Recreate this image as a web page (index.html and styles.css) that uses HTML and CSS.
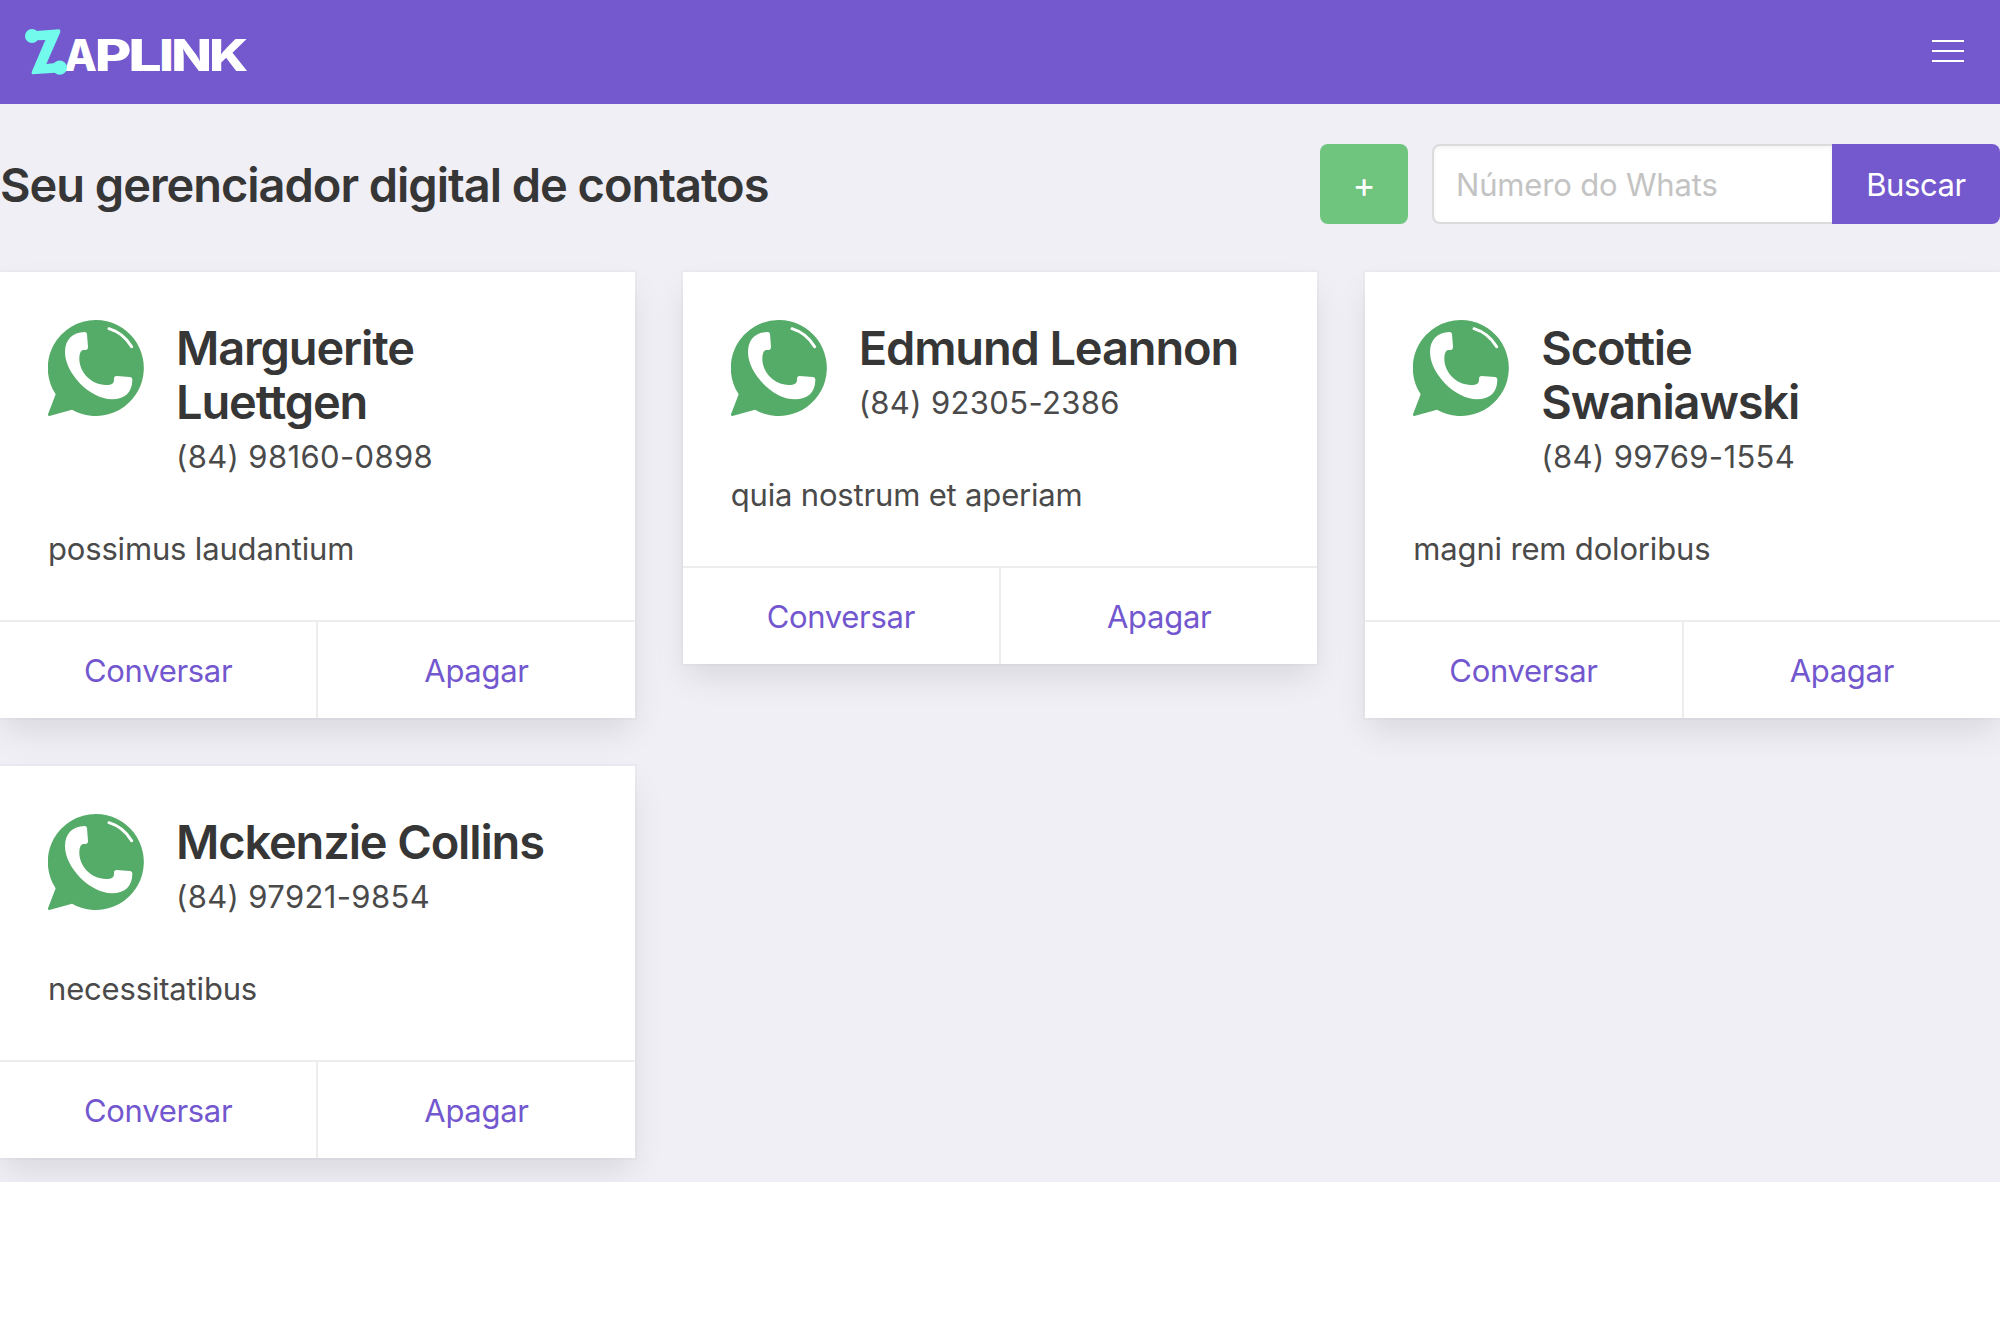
FILE: index.html
```html
<!DOCTYPE html>
<html lang="pt-BR">
<head>
<meta charset="utf-8">
<title>Zaplink</title>
<link rel="stylesheet" href="styles.css">
</head>
<body>
<svg class="sprite" aria-hidden="true">
  <symbol id="whats" viewBox="54 60 288 288">
    <path fill="#55ab68" d="M198 60a144 144 0 1 1-72 269L58 348Q53 348 54 343L77 283A144 144 0 0 1 198 60Z"/>
    <path fill="#fff" d="M164 96Q170 96 171 102L174 141Q174 150 166 150H160C151 152 148 162 148 178C149 218 184 255 228 255C246 255 253 250 252 236Q252 228 260 228L299 231Q308 232 307 241C306 279 284 298 246 298C180 298 105 220 105 157C105 119 127 97 164 96Z"/>
    <path fill="none" stroke="#fff" stroke-width="9" stroke-linecap="round" d="M237 86Q280 99 305 140"/>
  </symbol>
</svg>
<header class="navbar">
  <svg class="logo" viewBox="60 66 700 176" role="img" aria-label="Zaplink">
    <g class="logo-text">
      <text transform="translate(192 212) scale(.98 1)">A</text>
      <text transform="translate(284 212) scale(1.29 1)">P</text>
      <text transform="translate(385 212) scale(1.36 1)">L</text>
      <text transform="translate(477 212) scale(1.2 1)">I</text>
      <text transform="translate(514 212) scale(1.22 1)">N</text>
      <text transform="translate(627 212) scale(1.22 1)">K</text>
    </g>
    <g fill="#72fbec">
      <circle cx="96" cy="108" r="21"/>
      <circle cx="179" cy="203" r="21.500"/>
      <path d="M108 93L177 88Q182 88 181 96L139 192L166 189V218L97 223Q94 222 95 216L136 120L108 121Z"/>
    </g>
  </svg>
  <button class="burger" aria-label="Menu"><span></span><span></span><span></span></button>
</header>
<main class="section">
  <div class="toolbar">
    <h1 class="heading">Seu gerenciador digital de contatos</h1>
    <div class="actions">
      <button class="btn add">+</button>
      <div class="search">
        <input class="input" type="text" placeholder="Número do Whats">
        <button class="btn find">Buscar</button>
      </div>
    </div>
  </div>
  <div class="cards">
    <article class="card">
      <div class="content">
        <div class="media">
          <svg class="icon"><use href="#whats"/></svg>
          <div><h2 class="name">Marguerite Luettgen</h2><p class="phone">(84) 98160-0898</p></div>
        </div>
        <p class="desc">possimus laudantium</p>
      </div>
      <footer class="foot"><a class="link">Conversar</a><a class="link">Apagar</a></footer>
    </article>
    <article class="card">
      <div class="content">
        <div class="media">
          <svg class="icon"><use href="#whats"/></svg>
          <div><h2 class="name">Edmund Leannon</h2><p class="phone">(84) 92305-2386</p></div>
        </div>
        <p class="desc">quia nostrum et aperiam</p>
      </div>
      <footer class="foot"><a class="link">Conversar</a><a class="link">Apagar</a></footer>
    </article>
    <article class="card">
      <div class="content">
        <div class="media">
          <svg class="icon"><use href="#whats"/></svg>
          <div><h2 class="name">Scottie Swaniawski</h2><p class="phone">(84) 99769-1554</p></div>
        </div>
        <p class="desc">magni rem doloribus</p>
      </div>
      <footer class="foot"><a class="link">Conversar</a><a class="link">Apagar</a></footer>
    </article>
    <article class="card">
      <div class="content">
        <div class="media">
          <svg class="icon"><use href="#whats"/></svg>
          <div><h2 class="name">Mckenzie Collins</h2><p class="phone">(84) 97921-9854</p></div>
        </div>
        <p class="desc">necessitatibus</p>
      </div>
      <footer class="foot"><a class="link">Conversar</a><a class="link">Apagar</a></footer>
    </article>
  </div>
</main>
</body>
</html>
```
FILE: styles.css
```css
* { box-sizing: border-box; margin: 0; padding: 0; }
body {
  background: #fff;
  color: #4a4a4a;
  font: 400 31px/48px Inter, "Liberation Sans", sans-serif;
  letter-spacing: -0.17px;
  overflow-x: hidden;
}
button, input { font: inherit; letter-spacing: inherit; }
.sprite { display: none; }
.navbar {
  display: flex;
  justify-content: space-between;
  height: 104px;
  padding: 22px 36px 0 20px;
  background: #7458cd;
}
.logo { width: 233.33px; height: 58.67px; }
.logo-text { font: 800 131px Inter, sans-serif; letter-spacing: 0; fill: #fff; }
.burger {
  display: flex;
  flex-direction: column;
  gap: 8px;
  width: 32px;
  height: 22px;
  margin-top: 18px;
  border: 0;
  background: none;
}
.burger span { height: 2px; background: #fff; }
.section { height: 1078px; padding-top: 40px; background: #f0eff5; }
.toolbar { display: flex; justify-content: space-between; height: 80px; margin-bottom: 48px; }
.heading {
  padding-top: 14px;
  color: #363636;
  font-size: 47px;
  font-weight: 600;
  line-height: 54px;
  letter-spacing: -1.04px;
}
.actions { display: flex; gap: 24px; }
.btn { border: 0; border-radius: 8px; color: #fff; }
.add { width: 88px; font-size: 35px; background: #6fc47e; }
.search { display: flex; }
.input {
  width: 400px;
  padding: 2px 22px 0;
  border: 2px solid #dbdbdb;
  border-right: 0;
  border-radius: 8px 0 0 8px;
  background: #fff;
  box-shadow: inset 0 2px 4px rgba(10, 10, 10, .05);
}
.input::placeholder { color: #c3c3c3; opacity: 1; }
.find {
  width: 168px;
  padding-top: 2px;
  border-radius: 0 8px 8px 0;
  background: #7458cd;
  letter-spacing: -0.4px;
}
.cards {
  display: grid;
  grid-template-columns: repeat(3, 1fr);
  align-items: start;
  gap: 48px;
}
.card {
  background: #fff;
  box-shadow: 0 16px 32px -4px rgba(10, 10, 10, .1), 0 0 0 2px rgba(10, 10, 10, .02);
}
.content { padding: 49px 48px 47px; }
.media { display: flex; gap: 32px; margin-bottom: 48px; }
.icon { flex: none; width: 96px; height: 96px; margin-top: -1px; }
.name {
  margin-bottom: 8px;
  color: #363636;
  font-size: 47px;
  font-weight: 600;
  line-height: 54px;
  letter-spacing: -1.15px;
}
.phone { line-height: 40px; letter-spacing: 0.36px; }
.foot { display: flex; border-top: 2px solid #ededed; }
.link {
  flex: 1;
  padding: 25px 24px 23px;
  color: #7257cf;
  text-align: center;
  letter-spacing: -0.3px;
}
.link:first-child { border-right: 2px solid #ededed; }
```
